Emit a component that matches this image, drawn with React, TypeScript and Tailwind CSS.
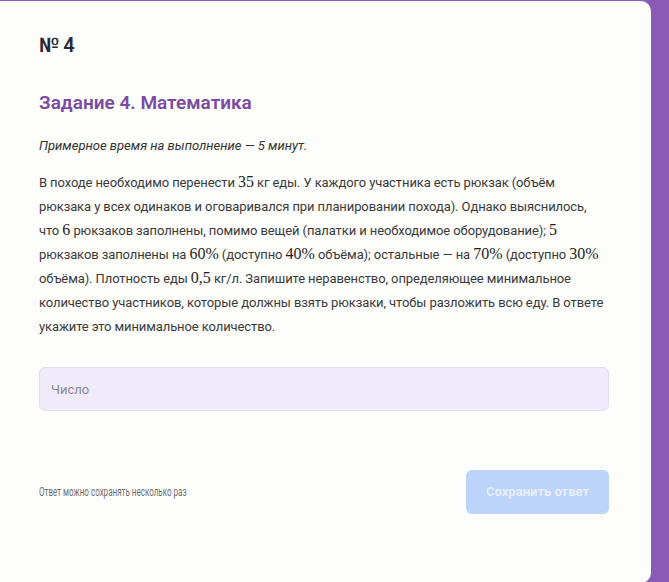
const M = ({ children }: { children: React.ReactNode }) => (
  <span className="font-['Liberation_Serif',serif] text-[16px] leading-none tracking-normal text-[#1e1e1e]">{children}</span>
);

export default function App() {
  return (
    <div className="h-[582px] w-[669px] overflow-hidden bg-[#8a5ab5] pt-px font-['Roboto',sans-serif]">
      <div className="-ml-[12px] flex h-[582px] w-[663px] flex-col rounded-[10px] bg-[#fdfdfb] pl-[51px] pr-[42px]">
        {/* Header */}
        <h1 className="mt-[32px] text-[20px] font-semibold leading-[24px] tracking-[-0.5px] text-[#2a2a33]">
          № 4
        </h1>
        <h2 className="mt-[34px] text-[19px] font-semibold leading-[24px] text-[#7a4b9f]">
          Задание 4. Математика
        </h2>

        {/* Task text */}
        <p className="mt-[19px] text-[13px] italic leading-[24px] text-[#333]">
          Примерное время на выполнение — 5 минут.
        </p>
        <p className="mt-[13px] text-[13px] leading-[24px] tracking-[-0.1px] text-[#3a3a3a]">
          В походе необходимо перенести <M>35</M> кг еды. У каждого участника есть рюкзак (объём
          рюкзака у всех одинаков и оговаривался при планировании похода). Однако выяснилось,
          что <M>6</M> рюкзаков заполнены, помимо вещей (палатки и необходимое оборудование); <M>5</M>{" "}
          рюкзаков заполнены на <M>60%</M> (доступно <M>40%</M> объёма); остальные — на <M>70%</M>{" "}
          (доступно <M>30%</M> объёма). Плотность еды <M>0,5</M> кг/л. Запишите неравенство,
          определяющее минимальное количество участников, которые должны взять рюкзаки, чтобы
          разложить всю еду. В ответе укажите это минимальное количество.
        </p>

        {/* Answer input */}
        <input
          type="text"
          placeholder="Число"
          className="mt-[28px] h-[44px] w-full rounded-[6px] border border-[#e2ddef] bg-[#efebfb] px-[11px] text-[13px] text-[#333] outline-none placeholder:text-[#8a8795]"
        />

        {/* Footer */}
        <div className="mt-[59px] flex items-center justify-between">
          <span className="inline-block origin-left scale-x-[0.67] whitespace-nowrap text-[12px] text-[#6e6e74]">
            Ответ можно сохранять несколько раз
          </span>
          <button className="h-[44px] w-[143px] rounded-[6px] bg-[#bcd3fa] text-[13px] font-semibold text-[#e9f0fd]">
            Сохранить ответ
          </button>
        </div>
      </div>
    </div>
  );
}
